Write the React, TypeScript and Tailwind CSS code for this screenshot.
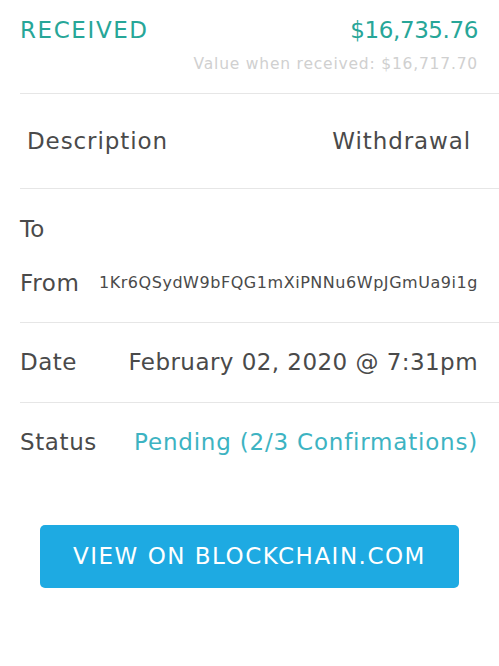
import React from "react";

const font = { fontFamily: '"DejaVu Sans", "Open Sans", sans-serif' };

const App: React.FC = () => {
  return (
    <div className="w-[499px] h-[666px] bg-white text-[#4a4a4a]" style={font}>
      {/* header */}
      <div className="ml-[20px] h-[94px] border-b border-[#e6e6e6] pr-[21px] pt-[13px]">
        <div className="flex justify-between items-center text-[#27a698] text-[23px] leading-[34px]">
          <span className="tracking-[1.6px]">RECEIVED</span>
          <span className="tracking-[-0.4px]">$16,735.76</span>
        </div>
        <div className="text-right text-[#d0d0d0] text-[15.5px] tracking-[0.8px] leading-[20px] mt-[7px]">
          Value when received: $16,717.70
        </div>
      </div>
      {/* description */}
      <div className="ml-[20px] h-[95px] border-b border-[#e6e6e6] pr-[28px] pl-[7px] flex items-center justify-between text-[23px] tracking-[0.9px]">
        <span>Description</span>
        <span>Withdrawal</span>
      </div>
      {/* to / from */}
      <div className="ml-[20px] h-[134px] border-b border-[#e6e6e6] pr-[21px] pt-[25px] flex flex-col gap-[24px] text-[23px]">
        <div className="leading-[30px]">To</div>
        <div className="flex items-center justify-between leading-[30px]">
          <span className="tracking-[0.6px]">From</span>
          <span className="text-[16px] tracking-[0.55px]">1Kr6QSydW9bFQG1mXiPNNu6WpJGmUa9i1g</span>
        </div>
      </div>
      {/* date */}
      <div className="ml-[20px] h-[80px] border-b border-[#e6e6e6] pr-[21px] flex items-center justify-between text-[23px] tracking-[0.45px]">
        <span>Date</span>
        <span>February 02, 2020 @ 7:31pm</span>
      </div>
      {/* status */}
      <div className="ml-[20px] h-[78px] pr-[21px] flex items-center justify-between text-[23px] tracking-[0.6px]">
        <span>Status</span>
        <span className="text-[#3db3c2] tracking-[0.8px]">Pending (2/3 Confirmations)</span>
      </div>
      <div className="px-[40px] pt-[44px]">
        <button className="w-[419px] h-[63px] rounded-[5px] bg-[#1eaae2] text-white text-[23px] tracking-[1.5px] flex items-center justify-center">
          VIEW ON BLOCKCHAIN.COM
        </button>
      </div>
    </div>
  );
};

export default App;
